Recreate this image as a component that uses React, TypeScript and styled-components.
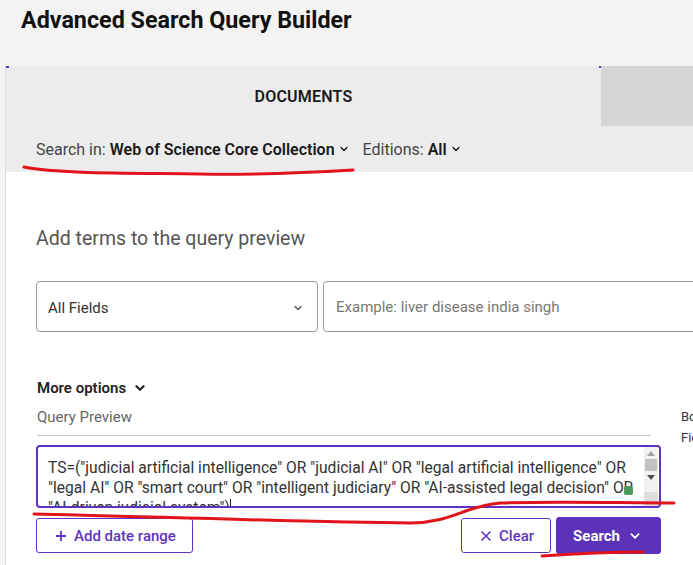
import React from "react";
import styled, { createGlobalStyle } from "styled-components";

const FONT = `"Roboto", "Noto Sans", sans-serif`;
const PURPLE = "#5e33bf";

const GlobalStyle = createGlobalStyle`
  html, body { margin: 0; padding: 0; }
  body {
    background: #f3f3f3;
    font-family: ${FONT};
    color: #222;
    overflow: hidden;
    width: 693px;
    height: 565px;
  }
`;

const Page = styled.div`
  position: relative;
  width: 693px;
  height: 565px;
  overflow: hidden;
`;

const Header = styled.header`
  height: 66px;
  padding: 6px 0 0 21px;
  box-sizing: border-box;
`;

const Title = styled.h1`
  margin: 0;
  font-size: 23.3px;
  line-height: 28px;
  font-weight: 700;
  color: #111;
`;

const Card = styled.section`
  margin-left: 5px;
  border-left: 1px solid #dcdcdc;
  background: #fff;
  width: 720px;
  min-height: 499px;
`;

const Tabs = styled.div`
  display: flex;
  height: 60px;
  background: #d6d6d6;
`;

const Tab = styled.div<{ $active?: boolean }>`
  position: relative;
  width: ${(p) => (p.$active ? "595px" : "auto")};
  flex: ${(p) => (p.$active ? "none" : "1")};
  display: flex;
  align-items: center;
  justify-content: center;
  background: ${(p) => (p.$active ? "#ececec" : "#d6d6d6")};
  font-size: 16px;
  font-weight: 600;
  color: #1a1a1a;
  letter-spacing: 0.2px;
  &::before, &::after {
    content: "";
    position: absolute;
    top: 0;
    width: 3px;
    height: 2px;
    background: ${(p) => (p.$active ? PURPLE : "transparent")};
  }
  &::before { left: 0; }
  &::after { right: -1px; }
`;

const FilterBar = styled.div`
  display: flex;
  align-items: center;
  gap: 14px;
  height: 46px;
  padding: 0 0 0 30px;
  background: #ececec;
  font-size: 16px;
`;

const Filter = styled.div`
  display: flex;
  align-items: center;
  gap: 4px;
  color: #444;
`;

const FilterValue = styled.span`
  color: #1a1a1a;
  font-weight: 600;
`;

const Content = styled.div`
  padding: 55px 0 0 30px;
`;

const Heading = styled.h2`
  margin: 0;
  font-size: 19.5px;
  line-height: 24px;
  font-weight: 400;
  color: #555;
`;

const InputRow = styled.div`
  display: flex;
  gap: 5px;
  margin-top: 30px;
`;

const SelectBox = styled.div`
  width: 282px;
  height: 51px;
  box-sizing: border-box;
  border: 1px solid #9a9a9a;
  border-radius: 4px;
  display: flex;
  align-items: center;
  justify-content: space-between;
  padding: 2px 14px 0 11px;
  font-size: 15px;
  color: #333;
`;

const TextInput = styled.div`
  width: 400px;
  height: 51px;
  box-sizing: border-box;
  border: 1px solid #9a9a9a;
  border-radius: 4px;
  display: flex;
  align-items: center;
  padding: 0 12px;
  font-size: 15px;
  color: #777;
`;

const Lower = styled.div`
  display: flex;
  gap: 20px;
  margin-top: 46px;
`;

const MainCol = styled.div`
  width: 625px;
  display: flex;
  flex-direction: column;
`;

const MoreOptions = styled.div`
  display: flex;
  align-items: center;
  gap: 8px;
  height: 20px;
  padding-left: 1px;
  font-size: 15px;
  font-weight: 600;
  color: #222;
`;

const Label = styled.div`
  margin-top: 9px;
  padding-left: 1px;
  font-size: 15px;
  line-height: 20px;
  color: #666;
`;

const Rule = styled.hr`
  margin: 8px 10px 0 1px;
  border: none;
  border-top: 1px solid #c6c6c6;
`;

const QueryBox = styled.div`
  position: relative;
  margin-top: 9px;
  height: 63px;
  box-sizing: border-box;
  border: 2px solid ${PURPLE};
  border-radius: 4px;
  display: flex;
  overflow: hidden;
`;

const QueryText = styled.div`
  flex: 1;
  padding: 11px 0 0 10px;
  font-size: 15.6px;
  line-height: 20px;
  color: #333;
`;

const QueryLine = styled.div`
  white-space: nowrap;
`;

const Caret = styled.span`
  display: inline-block;
  width: 1px;
  height: 17px;
  background: #222;
  vertical-align: -3px;
`;

const Scrollbar = styled.div`
  width: 14px;
  margin-right: 1px;
  display: flex;
  flex-direction: column;
  align-items: center;
  background: #f1f1f1;
`;

const ScrollArrow = styled.div`
  height: 12px;
  display: flex;
  align-items: center;
  justify-content: center;
`;

const ScrollThumb = styled.div`
  width: 12px;
  height: 12px;
  background: #c2c2c2;
`;

const ScrollCorner = styled.div`
  margin-top: auto;
  width: 14px;
  height: 14px;
  background: #dedede;
`;

const GreenDot = styled.div`
  position: absolute;
  right: 26px;
  top: 39px;
  width: 9px;
  height: 9px;
  border-radius: 2px;
  background: #4b9a5c;
`;

const Buttons = styled.div`
  display: flex;
  align-items: center;
  margin-top: 9px;
  gap: 5px;
`;

const Button = styled.button<{ $primary?: boolean }>`
  display: flex;
  align-items: center;
  justify-content: center;
  gap: ${(p) => (p.$primary ? "9px" : "7px")};
  height: ${(p) => (p.$primary ? "37px" : "35px")};
  padding: 0 ${(p) => (p.$primary ? "19px 0 16px" : "16px 0 18px")};
  border: 1px solid ${PURPLE};
  border-radius: 3px;
  background: ${(p) => (p.$primary ? "#5c32bb" : "#fff")};
  color: ${(p) => (p.$primary ? "#fff" : PURPLE)};
  font-family: ${FONT};
  font-size: 15px;
  font-weight: ${(p) => (p.$primary ? 700 : 500)};
  cursor: pointer;
`;

const Spacer = styled.div`
  flex: 1;
`;

const Side = styled.div`
  margin-top: 28px;
  font-size: 13px;
  line-height: 21px;
  color: #333;
  white-space: nowrap;
`;

const Annotations = styled.svg`
  position: absolute;
  left: 0;
  top: 0;
  pointer-events: none;
`;

const Chevron = ({ size = 10, color = "currentColor", w = 1.6 }: { size?: number; color?: string; w?: number }) => (
  <svg width={size} height={size} viewBox="0 0 10 10" fill="none">
    <path d="M2 3.5 L5 6.5 L8 3.5" stroke={color} strokeWidth={w} strokeLinecap="round" strokeLinejoin="round" />
  </svg>
);

export default function App() {
  return (
    <Page>
      <GlobalStyle />
      <Header>
        <Title>Advanced Search Query Builder</Title>
      </Header>
      <Card>
        <Tabs>
          <Tab $active>DOCUMENTS</Tab>
          <Tab />
        </Tabs>
        <FilterBar>
          <Filter>
            Search in: <FilterValue>Web of Science Core Collection</FilterValue>
            <Chevron color="#222" />
          </Filter>
          <Filter>
            Editions: <FilterValue>All</FilterValue>
            <Chevron color="#222" />
          </Filter>
        </FilterBar>
        <Content>
          <Heading>Add terms to the query preview</Heading>
          <InputRow>
            <SelectBox>
              All Fields
              <Chevron color="#555" w={1.3} />
            </SelectBox>
            <TextInput>Example: liver disease india singh</TextInput>
          </InputRow>
          <Lower>
            <MainCol>
              <MoreOptions>
                More options
                <Chevron size={12} color="#222" w={1.8} />
              </MoreOptions>
              <Label>Query Preview</Label>
              <Rule />
              <QueryBox>
                <QueryText>
                  <QueryLine>TS=("judicial artificial intelligence" OR "judicial AI" OR "legal artificial intelligence" OR</QueryLine>
                  <QueryLine>"legal AI" OR "smart court" OR "intelligent judiciary" OR "AI-assisted legal decision" OR</QueryLine>
                  <QueryLine>
                    "AI-driven judicial system")<Caret />
                  </QueryLine>
                </QueryText>
                <Scrollbar>
                  <ScrollArrow>
                    <svg width="8" height="5" viewBox="0 0 8 5"><path d="M0 5 L4 0 L8 5 Z" fill="#a3a3a3" /></svg>
                  </ScrollArrow>
                  <ScrollThumb />
                  <ScrollArrow>
                    <svg width="8" height="5" viewBox="0 0 8 5"><path d="M0 0 L4 5 L8 0 Z" fill="#505050" /></svg>
                  </ScrollArrow>
                  <ScrollCorner />
                </Scrollbar>
                <GreenDot />
              </QueryBox>
              <Buttons>
                <Button>
                  <svg width="12" height="12" viewBox="0 0 12 12"><path d="M6 1 V11 M1 6 H11" stroke={PURPLE} strokeWidth="1.8" /></svg>
                  Add date range
                </Button>
                <Spacer />
                <Button>
                  <svg width="12" height="12" viewBox="0 0 12 12"><path d="M1.5 1.5 L10.5 10.5 M10.5 1.5 L1.5 10.5" stroke={PURPLE} strokeWidth="1.6" /></svg>
                  Clear
                </Button>
                <Button $primary>
                  Search
                  <Chevron size={12} color="#fff" w={1.4} />
                </Button>
              </Buttons>
            </MainCol>
            <Side>
              Bo
              <br />
              Fie
            </Side>
          </Lower>
        </Content>
      </Card>
      <Annotations width="693" height="565" viewBox="0 0 693 565">
        <path d="M24 167 C 60 174, 130 173, 200 174 C 260 175, 320 172, 353 170" stroke="#e0141b" strokeWidth="3" fill="none" strokeLinecap="round" />
        <path d="M34 514 C 130 516, 300 522, 411 523 C 450 523, 465 506, 500 503 C 560 501, 620 503, 674 503" stroke="#e0141b" strokeWidth="3" fill="none" strokeLinecap="round" />
        <path d="M542 556 C 570 554, 610 552, 643 552" stroke="#e0141b" strokeWidth="3" fill="none" strokeLinecap="round" />
      </Annotations>
    </Page>
  );
}
